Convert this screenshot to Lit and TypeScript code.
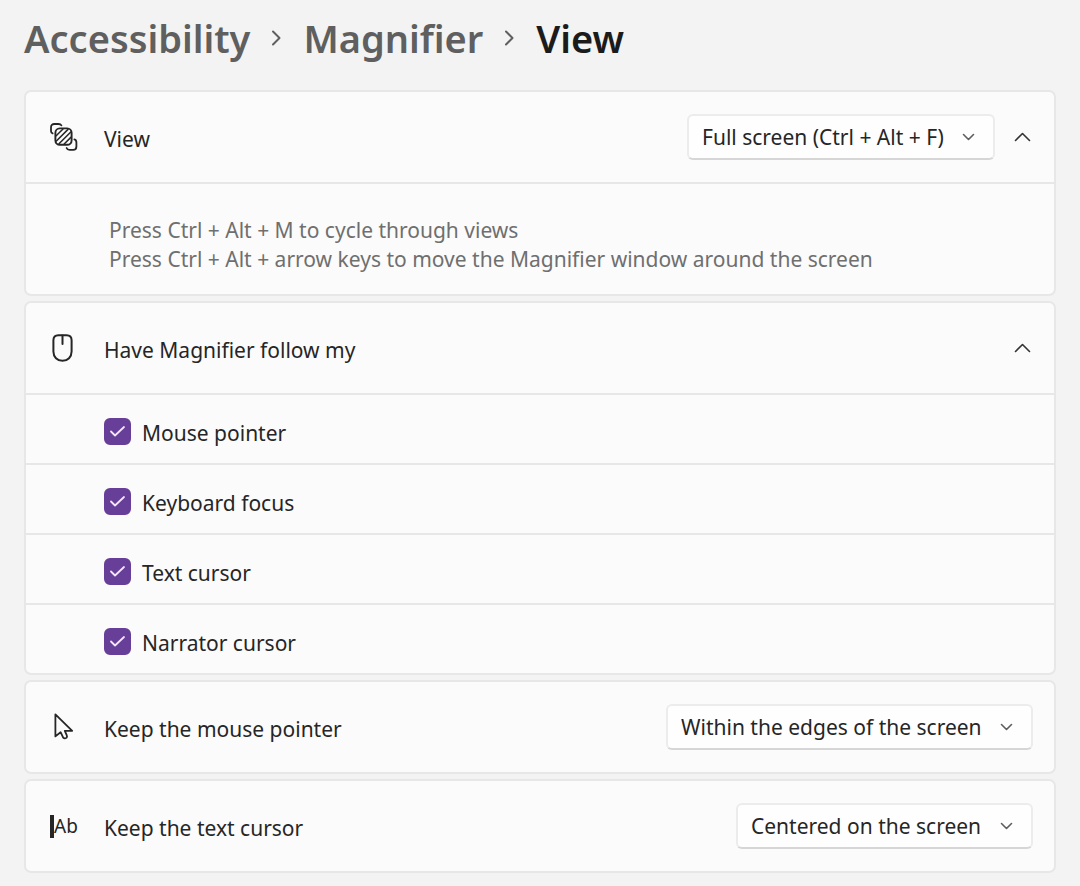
import { LitElement, html, css, svg, nothing, type TemplateResult } from "lit";
import { customElement, property, state } from "lit/decorators.js";

const viewIcon = svg`
  <svg viewBox="0 0 28 28" width="28" height="28" fill="none" stroke="currentColor" stroke-width="1.8" stroke-linecap="round" aria-hidden="true">
    <path d="M2.600 10.400 C1.400 10 1 9.200 1 8 V4.400 C1 2.200 2.200 1 4.400 1 H8.400 C10 1 10.800 1.400 11.400 2.400"/>
    <path d="M24.400 16.400 C26 16.800 26.400 17.800 26.400 19.600 V23.400 C26.400 25.600 25.400 26.800 23.200 26.800 H19.600 C18 26.800 17 26.200 16.600 25"/>
    <rect x="5.400" y="5.400" width="16.200" height="16.400" rx="4.400" stroke-width="1.900"/>
    <path d="M6.200 12.800 L13 6 M6.400 18 L18 6.400 M9 20.800 L20.800 9 M14.200 21 L20.800 14.400" stroke-width="1.500"/>
  </svg>`;

const mouseIcon = svg`
  <svg viewBox="0 0 28 28" width="28" height="28" fill="none" stroke="currentColor" stroke-width="2" stroke-linecap="round" aria-hidden="true">
    <path d="M8.400 1.200 H16.600 Q21.600 1.200 21.600 6.200 V17.600 C21.600 23 17.800 26.800 12.500 26.800 C7.200 26.800 3.400 23 3.400 17.600 V6.200 Q3.400 1.200 8.400 1.200 Z"/>
    <path d="M12.500 1.600 V10"/>
  </svg>`;

const pointerIcon = svg`
  <svg viewBox="0 0 28 28" width="28" height="28" fill="none" stroke="currentColor" stroke-width="1.8" stroke-linejoin="round" aria-hidden="true">
    <path d="M5.400 1.400 V23.400 L10.600 19.200 L13.200 24.600 Q14.800 26.200 16.600 24.600 Q17.400 23.600 16.800 22.400 L14.800 17.800 H22.200 Z"/>
  </svg>`;

const textCursorIcon = html`<span class="ab" aria-hidden="true">Ab</span>`;

const chevron = (d: string, w: number, h: number, stroke = 1.6) => svg`
  <svg class="chev" viewBox="0 0 ${w} ${h}" width=${w} height=${h} fill="none" stroke="currentColor" stroke-width=${stroke} stroke-linecap="round" stroke-linejoin="round" aria-hidden="true">
    <path d=${d}/>
  </svg>`;

@customElement("drop-down")
class DropDown extends LitElement {
  @property() label = "";
  @property({ attribute: false }) options: string[] = [];

  static styles = css`
    :host {
      display: block;
    }
    .box {
      display: grid;
      align-items: center;
    }
    select,
    .chev {
      grid-area: 1 / 1;
    }
    select {
      appearance: none;
      height: 46px;
      padding: 0 49px 0 13px;
      border: 2px solid #ececec;
      border-bottom-color: #d6d6d6;
      border-radius: 6px;
      background: #fefefe;
      color: #262626;
      font: inherit;
    }
    .chev {
      justify-self: end;
      margin-right: 20px;
      pointer-events: none;
      color: #5e5e5e;
    }
  `;

  render() {
    return html`<div class="box">
      <select aria-label=${this.label}>
        ${this.options.map((o) => html`<option>${o}</option>`)}
      </select>
      ${chevron("M1.500 1.500 L6.500 6.500 L11.500 1.500", 13, 8)}
    </div>`;
  }
}

@customElement("setting-card")
class SettingCard extends LitElement {
  @property() heading = "";
  @property({ attribute: false }) icon: unknown = nothing;
  @property({ attribute: false }) options: string[] = [];
  @property({ type: Boolean }) expandable = false;
  @state() private open = true;

  static styles = css`
    :host {
      display: block;
      border: 2px solid #e7e7e7;
      border-radius: 7px;
      background: #fbfbfb;
    }
    .head {
      display: flex;
      align-items: center;
      min-height: 90px;
      padding: 0 21px 0 24px;
    }
    .icon {
      display: flex;
      width: 54px;
    }
    .title {
      flex: 1;
      margin: 0;
      padding-top: 4px;
      font: inherit;
    }
    .ab {
      border-left: 4px solid currentColor;
      font-size: 19px;
      line-height: 23px;
    }
    .toggle {
      display: flex;
      align-items: center;
      justify-content: center;
      width: 28px;
      height: 28px;
      margin-left: 13px;
      margin-right: -3px;
      padding: 0;
      border: 0;
      background: none;
      color: #333;
    }
    .closed {
      transform: rotate(180deg);
    }
  `;

  render() {
    return html`
      <div class="head">
        <span class="icon">${this.icon}</span>
        <h2 class="title">${this.heading}</h2>
        ${this.options.length
          ? html`<drop-down .label=${this.heading} .options=${this.options}></drop-down>`
          : nothing}
        ${this.expandable
          ? html`<button
              class=${this.open ? "toggle" : "toggle closed"}
              aria-label=${this.heading}
              aria-expanded=${this.open ? "true" : "false"}
              @click=${() => (this.open = !this.open)}
            >
              ${chevron("M1.500 8.500 L8.500 1.500 L15.500 8.500", 17, 10)}
            </button>`
          : nothing}
      </div>
      ${this.open ? html`<slot></slot>` : nothing}
    `;
  }
}

@customElement("app-root")
class AppRoot extends LitElement {
  private follow = ["Mouse pointer", "Keyboard focus", "Text cursor", "Narrator cursor"];

  static styles = css`
    :host {
      display: block;
      box-sizing: border-box;
      min-height: 100vh;
      padding: 12px 24px 13px;
      background: #f3f3f3;
      color: #262626;
      font: 21px/29px "Noto Sans", "Open Sans", sans-serif;
    }
    .crumbs {
      display: flex;
      align-items: center;
      gap: 21px;
      margin: 0 0 26px;
      padding: 0;
      list-style: none;
      font-size: 38px;
      font-weight: 600;
      line-height: 52px;
      color: #5f5f5f;
    }
    .crumbs li {
      display: flex;
    }
    .crumbs a {
      color: inherit;
      text-decoration: none;
    }
    .current {
      margin: 0;
      font: inherit;
      color: #1b1b1b;
    }
    .cards {
      display: flex;
      flex-direction: column;
      gap: 5px;
    }
    .note {
      margin: 0;
      padding: 32px 24px 20px 83px;
      border-top: 2px solid #e7e7e7;
      color: #6f6f6f;
    }
    .row {
      display: flex;
      align-items: center;
      gap: 11px;
      min-height: 64px;
      padding: 4px 24px 0 78px;
      border-top: 2px solid #e7e7e7;
    }
    .row label {
      padding-top: 4px;
    }
    .check {
      display: grid;
      place-items: center;
    }
    .check input,
    .tick {
      grid-area: 1 / 1;
    }
    .check input {
      appearance: none;
      width: 27px;
      height: 27px;
      margin: 0;
      border-radius: 6px;
      border: 2px solid #8a8a8a;
      background: #fff;
    }
    .check input:checked {
      border-color: #673f98;
      background: #673f98;
    }
    .tick {
      pointer-events: none;
      color: #f3e6fb;
    }
  `;

  private renderCheck(label: string, i: number): TemplateResult {
    return html`<div class="row">
      <span class="check">
        <input type="checkbox" id="follow-${i}" checked />
        <svg class="tick" viewBox="0 0 15 11" width="15" height="11" fill="none" stroke="currentColor" stroke-width="1.8" stroke-linecap="round" stroke-linejoin="round" aria-hidden="true">
          <path d="M1 5.500 L5 9.500 L14 1" />
        </svg>
      </span>
      <label for="follow-${i}">${label}</label>
    </div>`;
  }

  render() {
    const next = chevron("M2 1.500 L8.500 8 L2 14.500", 11, 16, 2);
    return html`
      <nav aria-label="Breadcrumb">
        <ol class="crumbs">
          <li><a href="#accessibility">Accessibility</a></li>
          <li aria-hidden="true">${next}</li>
          <li><a href="#magnifier">Magnifier</a></li>
          <li aria-hidden="true">${next}</li>
          <li><h1 class="current" aria-current="page">View</h1></li>
        </ol>
      </nav>
      <main class="cards">
        <setting-card heading="View" .icon=${viewIcon} .options=${["Full screen (Ctrl + Alt + F)"]} expandable>
          <p class="note">
            Press Ctrl + Alt + M to cycle through views<br />
            Press Ctrl + Alt + arrow keys to move the Magnifier window around the screen
          </p>
        </setting-card>
        <setting-card heading="Have Magnifier follow my" .icon=${mouseIcon} expandable>
          ${this.follow.map((label, i) => this.renderCheck(label, i))}
        </setting-card>
        <setting-card
          heading="Keep the mouse pointer"
          .icon=${pointerIcon}
          .options=${["Within the edges of the screen"]}
        ></setting-card>
        <setting-card
          heading="Keep the text cursor"
          .icon=${textCursorIcon}
          .options=${["Centered on the screen"]}
        ></setting-card>
      </main>
    `;
  }
}
